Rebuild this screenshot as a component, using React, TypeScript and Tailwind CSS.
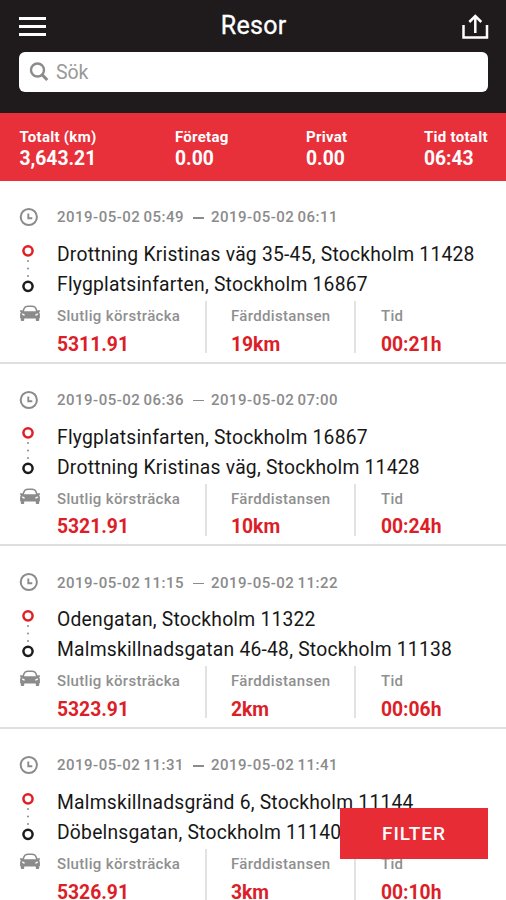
const trips = [
  { start: '2019-05-02 05:49', end: '2019-05-02 06:11', from: 'Drottning Kristinas väg 35-45, Stockholm 11428', to: 'Flygplatsinfarten, Stockholm 16867', odometer: '5311.91', distance: '19km', time: '00:21h' },
  { start: '2019-05-02 06:36', end: '2019-05-02 07:00', from: 'Flygplatsinfarten, Stockholm 16867', to: 'Drottning Kristinas väg, Stockholm 11428', odometer: '5321.91', distance: '10km', time: '00:24h' },
  { start: '2019-05-02 11:15', end: '2019-05-02 11:22', from: 'Odengatan, Stockholm 11322', to: 'Malmskillnadsgatan 46-48, Stockholm 11138', odometer: '5323.91', distance: '2km', time: '00:06h' },
  { start: '2019-05-02 11:31', end: '2019-05-02 11:41', from: 'Malmskillnadsgränd 6, Stockholm 11144', to: 'Döbelnsgatan, Stockholm 11140', odometer: '5326.91', distance: '3km', time: '00:10h' },
];

type Trip = (typeof trips)[number];

function ClockIcon() {
  return (
    <svg className="block" width="20" height="20" viewBox="0 0 20 20" fill="none" stroke="#8b8b8b">
      <circle cx="9.8" cy="10" r="8.1" strokeWidth="2" />
      <path d="M9.3 6.6v4.6h4" strokeWidth="1.9" />
    </svg>
  );
}

function RouteIcon() {
  return (
    <svg className="block" width="14" height="50" viewBox="0 0 14 50" fill="none">
      <circle cx="7" cy="6.8" r="4.6" stroke="#e01e26" strokeWidth="2.5" />
      <g fill="#8b8b8b">
        <circle cx="7" cy="17" r="1" />
        <circle cx="7" cy="24.5" r="1" />
        <circle cx="7" cy="32" r="1" />
      </g>
      <circle cx="7" cy="42.3" r="4.6" stroke="#1c1b1d" strokeWidth="2.5" />
    </svg>
  );
}

function CarIcon() {
  return (
    <svg className="block" width="22" height="18" viewBox="0 0 22 18" fill="#8b8b8b">
      <path fillRule="evenodd" d="M5.2 1.9C6 .9 8 .6 11 .6s5 .3 5.8 1.3c.7.9 1.2 2.2 1.7 3.6.5-.4 2-.5 2.5 0 .4.5.1 1.3-.9 1.5.5.7.8 1.5.8 2.5v3.7h-.7v1.8c0 .7-.4 1-1 1h-1.4c-.6 0-1-.3-1-1v-1.600H5.200V15c0 .7-.4 1-1 1H2.800c-.6 0-1-.3-1-1v-1.800h-.7V9.500c0-1 .3-1.800.8-2.500C.9 6.800.6 6 1 5.500c.5-.5 2-.4 2.500 0 .5-1.400 1-2.700 1.700-3.600zM6.300 3c-.6.800-1 2-1.300 3.200h12c-.3-1.200-.7-2.400-1.300-3.200-.5-.7-2-1-4.700-1s-4.200.3-4.700 1zM2.900 8.500c0 1.400.9 2.100 3 2.100 0-1.300-1-2.100-3-2.100zm16.200 0c-2 0-3 .8-3 2.100 2.100 0 3-.7 3-2.100z" />
    </svg>
  );
}

function Metric({ label, value }: { label: string; value: string }) {
  return (
    <div className="whitespace-nowrap">
      <div className="h-[34.5px] pt-[4px] text-[15px] leading-[22px] font-medium tracking-[0.33px] text-[#8f8f8f]">{label}</div>
      <div className="text-[19.3px] leading-[17px] font-bold text-[#dc1e28]">{value}</div>
    </div>
  );
}

function TripCard({ trip }: { trip: Trip }) {
  return (
    <article className="h-[182.7px] shrink-0 border-b-2 border-[#dfdfdf] pt-[24px]">
      <div className="flex h-6 items-center">
        <div className="w-[57px] pl-[19px]"><ClockIcon /></div>
        <div className="flex pt-px text-[15px] font-medium tracking-[0.5px] [word-spacing:-1.2px] whitespace-nowrap text-[#8b8b8b]">
          <span className="w-[135.5px]">{trip.start}</span>
          <span className="w-[18.5px]"><span className="mt-[11px] block h-[1.5px] w-[11px] bg-[#8b8b8b]" /></span>
          <span>{trip.end}</span>
        </div>
      </div>
      <div className="flex">
        <div className="w-[57px] pt-[14.5px] pl-[21px]"><RouteIcon /></div>
        <div className="pt-[11px] text-[19.3px] leading-[30px] font-normal tracking-[0.22px] whitespace-nowrap text-[#171717]">
          <div>{trip.from}</div>
          <div>{trip.to}</div>
        </div>
      </div>
      <div className="mt-px flex h-[52px]">
        <div className="w-[57px] pt-[4px] pl-[19px]"><CarIcon /></div>
        <div className="w-[149.5px] border-r-2 border-[#e2e2e2]"><Metric label="Slutlig körsträcka" value={trip.odometer} /></div>
        <div className="w-[149.5px] border-r-2 border-[#e2e2e2] pl-[24.5px]"><Metric label="Färddistansen" value={trip.distance} /></div>
        <div className="pl-[25px]"><Metric label="Tid" value={trip.time} /></div>
      </div>
    </article>
  );
}

function Total({ label, value }: { label: string; value: string }) {
  return (
    <div className="whitespace-nowrap">
      <div className="h-[21px] text-[15px] leading-[20px] font-bold tracking-[0.28px]">{label}</div>
      <div className="text-[19.3px] leading-[22px] font-bold">{value}</div>
    </div>
  );
}

export default function App() {
  return (
    <main className="relative flex h-[900px] w-[506px] flex-col overflow-hidden bg-white font-['Roboto',sans-serif]">
      <header className="h-[113px] shrink-0 bg-[#1f1b1d] pt-[11px]">
        <div className="flex h-[30px] items-center justify-between pr-[17px] pl-[19.4px]">
          <div className="flex w-[27px] flex-col gap-[5px]">
            <span className="h-[3px] bg-white" />
            <span className="h-[3px] bg-white" />
            <span className="h-[3px] bg-white" />
          </div>
          <h1 className="text-[25px] leading-[30px] font-normal tracking-[0.3px] text-white [-webkit-text-stroke:0.3px_white]">Resor</h1>
          <svg width="28" height="28" viewBox="0 0 28 28" fill="none" stroke="#fff" strokeWidth="2.5">
            <path d="M2.500 13v12.500h23.500V13M14.300 21V4M8.300 10l6-6 6 6" />
          </svg>
        </div>
        <div className="mr-[18px] ml-[19.4px] mt-[11px] flex h-[40px] items-center rounded-[6px] bg-white pl-[10px]">
          <svg width="20" height="20" viewBox="0 0 20 20" fill="none" stroke="#8b8b8b" strokeWidth="2.4">
            <circle cx="8.5" cy="8" r="6.5" />
            <path d="M13 12.600l5.300 5.400" strokeWidth="3" />
          </svg>
          <span className="ml-[6.5px] pt-[2px] text-[19.5px] text-[#999]">Sök</span>
        </div>
      </header>
      <section className="flex h-[68px] shrink-0 bg-[#e7303a] pt-[14px] pl-[19.5px] text-white">
        <div className="w-[155.5px]"><Total label="Totalt (km)" value="3,643.21" /></div>
        <div className="w-[131px]"><Total label="Företag" value="0.00" /></div>
        <div className="w-[118px]"><Total label="Privat" value="0.00" /></div>
        <Total label="Tid totalt" value="06:43" />
      </section>
      {trips.map((trip) => <TripCard key={trip.start} trip={trip} />)}
      <button className="absolute top-[808px] left-[340px] h-[51px] w-[148px] bg-[#e72c36] pt-px text-[19px] font-medium tracking-[1px] text-white">FILTER</button>
    </main>
  );
}
